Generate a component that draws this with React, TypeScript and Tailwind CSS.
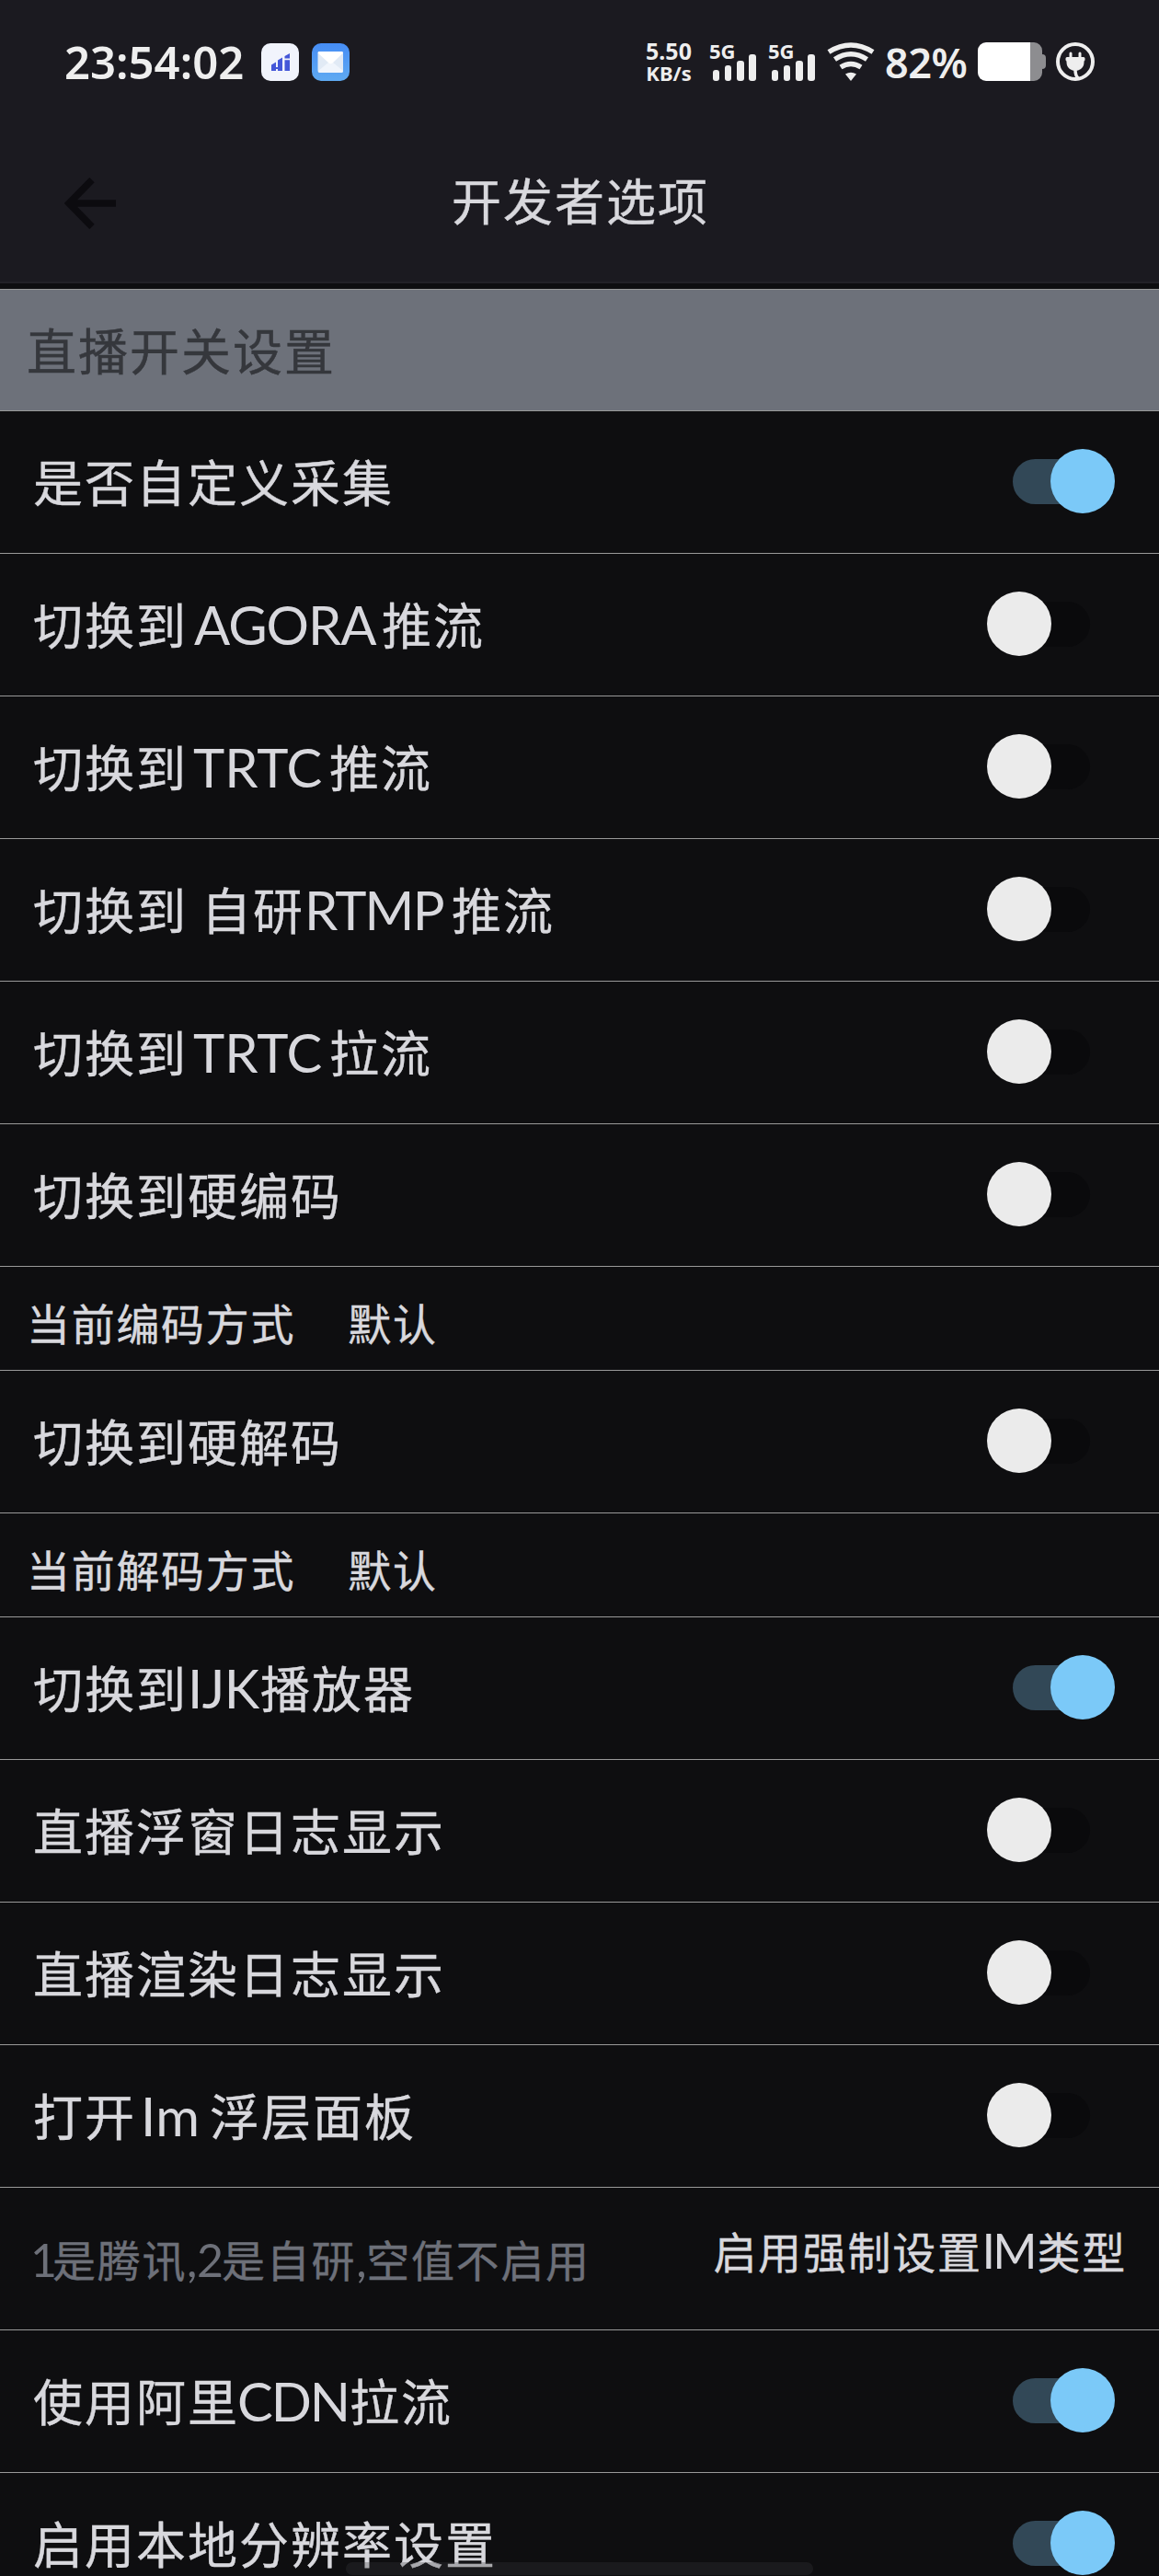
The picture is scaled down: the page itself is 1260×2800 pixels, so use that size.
import { ReactNode } from 'react';

type Item =
  | { kind: 'switch'; label: ReactNode; on: boolean }
  | { kind: 'info'; label: string; value: string }
  | { kind: 'input'; placeholder: ReactNode; action: ReactNode };

function Latin({ children, className }: { children: string; className: string }) {
  return <span className={`inline-block font-[Lato] leading-none whitespace-nowrap [-webkit-text-stroke:0] ${className}`}>{children}</span>;
}

const items: Item[] = [
  { kind: 'switch', label: '是否自定义采集', on: true },
  { kind: 'switch', label: <>切换到<Latin className="w-[211px] pl-[7px] text-[58px] tracking-[-1px]">AGORA</Latin>推流</>, on: false },
  { kind: 'switch', label: <>切换到<Latin className="w-[154px] pl-[6px] text-[58px] tracking-[0px]">TRTC</Latin>推流</>, on: false },
  { kind: 'switch', label: <>切换到<span className="inline-block w-[15px]" />自研<Latin className="w-[160px] text-[58px] tracking-[-1.8px]">RTMP</Latin>推流</>, on: false },
  { kind: 'switch', label: <>切换到<Latin className="w-[154px] pl-[6px] text-[58px] tracking-[0px]">TRTC</Latin>拉流</>, on: false },
  { kind: 'switch', label: '切换到硬编码', on: false },
  { kind: 'info', label: '当前编码方式', value: '默认' },
  { kind: 'switch', label: '切换到硬解码', on: false },
  { kind: 'info', label: '当前解码方式', value: '默认' },
  { kind: 'switch', label: <>切换到<Latin className="w-[79px] text-[58px] tracking-[-0.5px]">IJK</Latin>播放器</>, on: true },
  { kind: 'switch', label: '直播浮窗日志显示', on: false },
  { kind: 'switch', label: '直播渲染日志显示', on: false },
  { kind: 'switch', label: <>打开<Latin className="w-[80px] pl-[5px] text-[58px] tracking-[0.5px]">Im</Latin>浮层面板</>, on: false },
  {
    kind: 'input',
    placeholder: (
      <>
        <Latin className="-ml-[3px] w-[24px] text-[50px]">1</Latin>是腾讯<Latin className="w-[11px] text-[50px]">,</Latin>
        <Latin className="w-[27px] text-[50px] tracking-[-2px]">2</Latin>是自研<Latin className="w-[11px] text-[50px]">,</Latin>空值不启用
      </>
    ),
    action: <>启用强制设置<Latin className="w-[60px] text-[52px] tracking-[-3px]">IM</Latin>类型</>,
  },
  { kind: 'switch', label: <>使用阿里<Latin className="-ml-[2px] w-[122px] text-[58px] tracking-[-2px]">CDN</Latin>拉流</>, on: true },
  { kind: 'switch', label: '启用本地分辨率设置', on: true },
];

function Signal() {
  return (
    <div className="flex w-[64px] flex-col">
      <span className="h-[13px] text-[22px] leading-[18px] font-bold">5G</span>
      <svg viewBox="0 0 48 29" className="ml-[4px] h-[29px] w-[48px]" fill="#eee">
        <rect x="0" y="17" width="7" height="12" rx="3" />
        <rect x="13" y="12" width="7" height="17" rx="3" />
        <rect x="26" y="7" width="8" height="22" rx="3" />
        <rect x="39" y="0" width="8" height="29" rx="3" />
      </svg>
    </div>
  );
}

function Wifi() {
  return (
    <svg viewBox="0 0 52 42" className="h-[42px] w-[52px]" fill="none" stroke="#eee" strokeWidth="5.5">
      <path d="M2 10.5Q26-4.5 50 10.5" />
      <path d="M8.5 18.5Q26 7 43.5 18.5" />
      <path d="M15 27Q26 20 37 27" />
      <path d="M20 34.5Q26 31 32 34.5L26 42z" fill="#eee" stroke="none" />
    </svg>
  );
}

function Battery() {
  return (
    <svg viewBox="0 0 74 42" className="h-[42px] w-[74px]">
      <path d="M57 0h4a9 9 0 0 1 9 9v4q4 0 4 4v8q0 4-4 4v4a9 9 0 0 1-9 9h-4z" fill="#8d8d90" />
      <path d="M57 0H9a9 9 0 0 0-9 9v24a9 9 0 0 0 9 9h48z" fill="#fff" />
    </svg>
  );
}

function Plug() {
  return (
    <svg viewBox="0 0 42 42" className="ml-[11px] h-[42px] w-[42px]">
      <circle cx="21" cy="21" r="19" fill="none" stroke="#eee" strokeWidth="4" />
      <path d="M14.500 16v-4a1.500 1.500 0 0 1 3 0V16h7v-4a1.500 1.500 0 0 1 3 0V16h2.500q1.500 0 1.500 1.500v2q-1 0-1 2 0 5-3.500 7.500-3 2-6 2t-6-2q-3.500-2.500-3.500-7.500 0-2-1-2v-2q0-1.500 1.500-1.500z" fill="#eee" />
      <path d="M21 30q0 6 3 9" fill="none" stroke="#eee" strokeWidth="3.500" />
    </svg>
  );
}

function StatusBar() {
  return (
    <div className="flex h-[134px] items-center px-[70px] font-['Noto_Sans'] text-[#eee] [-webkit-text-stroke:0]">
      <span className="w-[214px] text-[49px] leading-none font-semibold">23:54:02</span>
      <svg viewBox="0 0 41 41" className="h-[41px] w-[41px]">
        <rect width="41" height="41" rx="10" fill="#f1f4fc" />
        <path d="M11 23.500l5-3V26h2v-7.500l5-3V30h-5v-2h-2v2h-5zM25.500 18.200h5.500V30h-5.500zM25.500 14l5.500-3v5.500h-5.500z" fill="#4457d8" />
      </svg>
      <svg viewBox="0 0 41 41" className="ml-[14px] h-[41px] w-[41px]">
        <defs>
          <linearGradient id="mail" x1="0" y1="0" x2="0" y2="1">
            <stop offset="0" stopColor="#468df5" />
            <stop offset="1" stopColor="#5faaf2" />
          </linearGradient>
        </defs>
        <rect width="41" height="41" rx="10" fill="url(#mail)" />
        <rect x="6.500" y="9" width="27.500" height="23" rx="2" fill="#e1eaf5" />
        <path d="M7 30l11-9h5l11 9q0 2-2 2H9q-2 0-2-2z" fill="#f0f5fc" />
        <path d="M6.500 10.500q0-1.500 1.500-1.500h24.500q1.500 0 1.500 1.500L23 21q-2.500 2.500-5 0z" fill="#fff" />
      </svg>
      <div className="ml-auto flex items-center">
        <div className="mr-[17px] flex w-[54px] flex-col items-center font-bold">
          <span className="text-[25px] leading-[23px]">5.50</span>
          <span className="text-[22px] leading-[24px]">KB/s</span>
        </div>
        <Signal />
        <Signal />
        <Wifi />
        <span className="mr-[9px] ml-[11px] w-[92px] text-[45px] leading-none font-semibold tracking-[-0.5px]">82%</span>
        <Battery />
        <Plug />
      </div>
    </div>
  );
}

function Switch({ on }: { on: boolean }) {
  return (
    <div className="flex h-[70px] w-[140px] items-center">
      <div className={`ml-[28px] flex h-[49px] w-[84px] items-center rounded-full ${on ? 'bg-[#324857]' : 'bg-[#0a0a0c]'}`}>
        <div className={`h-[70px] w-[70px] shrink-0 rounded-full ${on ? 'ml-[41px] bg-[#7bc9f8]' : '-ml-[28px] bg-[#ebebeb]'}`} />
      </div>
    </div>
  );
}

export default function App() {
  return (
    <div className="relative h-[2800px] w-[1260px] overflow-hidden bg-[#0e0e10] font-['Noto_Sans_CJK_SC',sans-serif] text-[#d8d8dd] [-webkit-text-stroke:0.4px]">
      <div className="h-[308px] border-b-2 border-[#222127] bg-[#1b1a20]">
        <StatusBar />
        <div className="grid h-[172px] grid-cols-[1fr_auto_1fr] items-start px-[70px] pt-[43px]">
          <svg viewBox="0 0 56 56" className="mt-[16px] h-[56px] w-[56px]" fill="none" stroke="#0c0b0f" strokeWidth="7.500">
            <path d="M30 2.500L5 28l25 25.500M5 28h51" />
          </svg>
          <h1 className="pl-[2px] text-[54px] leading-[80px] tracking-[2px]">开发者选项</h1>
        </div>
      </div>
      <div className="mt-[6px] h-[133px] border-y border-[#999] bg-[#6d717a] pl-[29px] text-[54px] leading-[129px] tracking-[2px] text-[#35373c]">直播开关设置</div>
      {items.map((item, i) => {
        if (item.kind === 'switch')
          return (
            <div key={i} className="flex h-[155px] items-center justify-between border-b border-[#999] pr-[47px] pb-[2px] pl-[36px]">
              <span className="text-[54px] leading-[66px] tracking-[2px] whitespace-nowrap">{item.label}</span>
              <Switch on={item.on} />
            </div>
          );
        if (item.kind === 'info')
          return (
            <div key={i} className="flex h-[113px] items-center gap-[57px] border-b border-[#999] pt-[8px] pl-[29px] text-[47px] leading-[60px] tracking-[1.7px]">
              <span>{item.label}</span>
              <span>{item.value}</span>
            </div>
          );
        return (
          <div key={i} className="flex h-[155px] items-center justify-between border-b border-[#999] pr-[35px] pl-[36px] text-[47px] leading-[60px] tracking-[1.7px]">
            <span className="text-[#6d7079]">{item.placeholder}</span>
            <span className="pb-[18px]">{item.action}</span>
          </div>
        );
      })}
      <div className="absolute top-[2785px] left-[376px] h-[14px] w-[508px] rounded-full bg-[#39393b]/30" />
    </div>
  );
}
